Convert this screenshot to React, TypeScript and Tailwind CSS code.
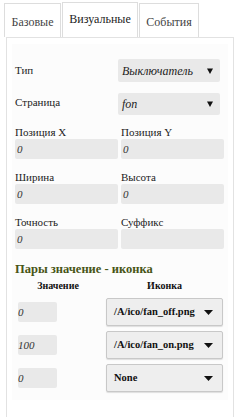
import React from "react";

function Caret({ big }: { big?: boolean }) {
  return big ? (
    <svg width="9" height="5" viewBox="0 0 9 5"><path d="M0 0h9L4.5 5z" fill="#111" /></svg>
  ) : (
    <svg width="6" height="6" viewBox="0 0 6 6"><path d="M0 0.5h6L3 6z" fill="#111" /></svg>
  );
}

function Field({ label, value }: { label: string; value?: string }) {
  return (
    <div className="w-[103px]">
      <div className="h-[13px] text-[11px] leading-[13px] text-[#222]">{label}</div>
      <div className="flex h-[20px] items-center rounded-[2px] bg-[#e9e9e9] pl-[2px] text-[11px] italic text-[#333]">{value}</div>
    </div>
  );
}

function PairRow({ value, icon }: { value: string; icon: string }) {
  return (
    <div className="flex items-center">
      <div className="ml-[3px] flex h-[20px] w-[39px] items-center rounded-[2px] bg-[#e9e9e9] text-[11px] italic text-[#333]">{value}</div>
      <div className="ml-[49px] flex h-[28px] w-[117px] items-center justify-between rounded-[2px] border border-[#c8c8c8] bg-[#eeeeee] pl-[7px] pr-[9px] text-[10.5px] font-bold text-[#111] shadow-[0_1px_1px_rgba(0,0,0,0.12)]">
        <span>{icon}</span>
        <Caret big />
      </div>
    </div>
  );
}

export default function App() {
  return (
    <div className="h-[417px] w-[240px] overflow-hidden bg-white font-['Liberation_Serif','DejaVu_Serif',serif]">
      <div className="flex h-[37px] items-end pl-[4px]">
        <div className="flex h-[34px] w-[57px] items-center justify-center border border-b-0 border-[#dddddd] pt-[2px] text-[12px] text-[#444]">Базовые</div>
        <div className="ml-[1px] flex h-[35px] w-[76px] items-center justify-center border border-b-0 border-[#dddddd] pb-[2px] text-[12px] text-[#222]">Визуальные</div>
        <div className="ml-[1px] flex h-[34px] w-[60px] items-center justify-center border border-b-0 border-[#dddddd] pt-[2px] text-[12px] text-[#444]">События</div>
      </div>
      <div className="ml-[6px] h-[380px] w-[228px] border border-b-0 border-[#e2e2e2] px-[5px] pt-[6px]">
        <div className="bg-[#fcfcfc] px-[3px] pb-[8px] pt-[16px]">
          <div className="flex items-start">
            <div className="w-[103px] pt-[2px] text-[11px] text-[#222]">Тип</div>
            <div className="-mt-[1px] flex h-[23px] w-[102px] items-center justify-between rounded-[2px] bg-[#e9e9e9] pl-[4px] pr-[7px] text-[12px] italic text-[#222]">
              <span>Выключатель</span>
              <Caret />
            </div>
          </div>
          <div className="mt-[11px] flex items-start">
            <div className="w-[103px] pt-[1px] text-[11px] text-[#222]">Страница</div>
            <div className="flex h-[22px] w-[102px] items-center justify-between rounded-[2px] bg-[#e9e9e9] pl-[4px] pr-[7px] text-[12px] italic text-[#222]">
              <span>fon</span>
              <Caret />
            </div>
          </div>
          <div className="mt-[11px] flex">
            <Field label="Позиция X" value="0" />
            <div className="ml-[3px]"><Field label="Позиция Y" value="0" /></div>
          </div>
          <div className="mt-[12px] flex">
            <Field label="Ширина" value="0" />
            <div className="ml-[3px]"><Field label="Высота" value="0" /></div>
          </div>
          <div className="mt-[12px] flex">
            <Field label="Точность" value="0" />
            <div className="ml-[3px]"><Field label="Суффикс" /></div>
          </div>
          <div className="mt-[13px] text-[12.5px] font-bold leading-[15px] text-[#475516]">Пары значение - иконка</div>
          <div className="mt-[3px] flex text-[10px] font-bold leading-[12px] text-[#111]">
            <div className="w-[86px] text-center">Значение</div>
            <div className="ml-[5px] w-[117px] text-center">Иконка</div>
          </div>
          <div className="mt-[6px] flex flex-col gap-[5px]">
            <PairRow value="0" icon="/A/ico/fan_off.png" />
            <PairRow value="100" icon="/A/ico/fan_on.png" />
            <PairRow value="0" icon="None" />
          </div>
        </div>
      </div>
    </div>
  );
}
